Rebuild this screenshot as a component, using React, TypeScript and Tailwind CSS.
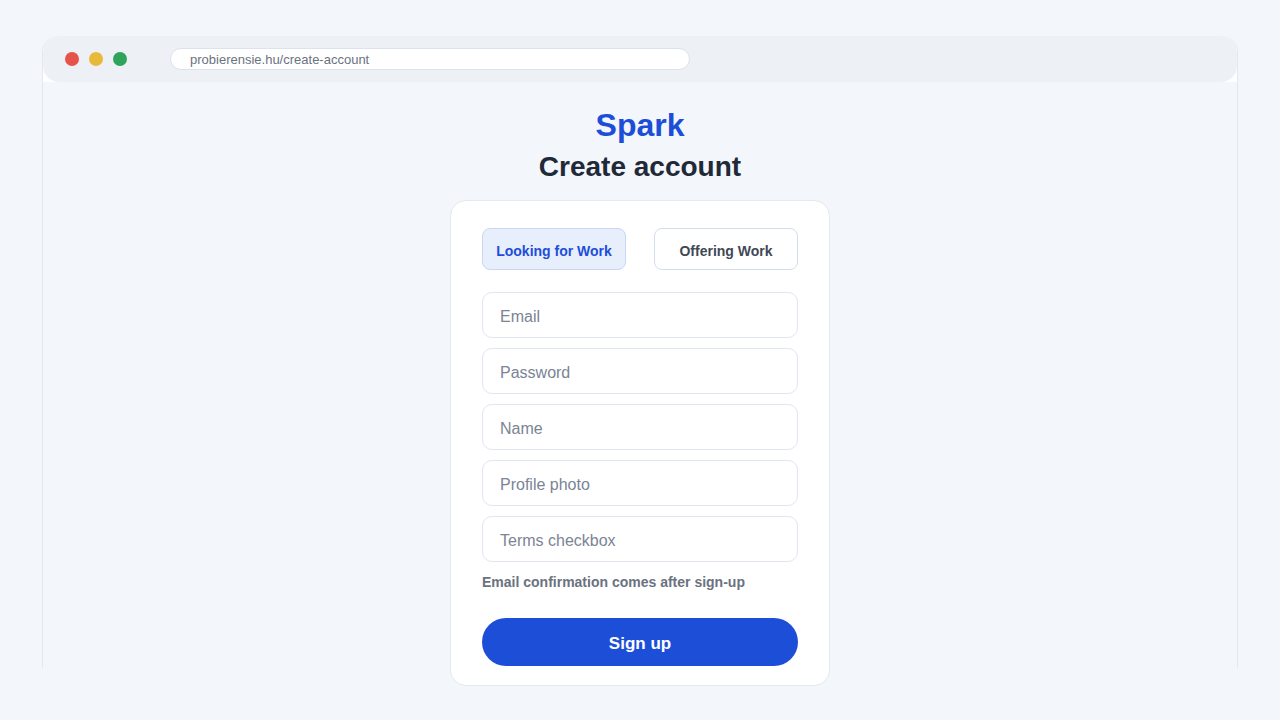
import React from "react";

export default function App() {
  const font = { fontFamily: '"Liberation Sans", Arial, sans-serif' };
  const fields = ["Email", "Password", "Name", "Profile photo", "Terms checkbox"];
  return (
    <div className="w-[1280px] h-[720px] overflow-hidden bg-[#f3f6fa] pt-[36px] px-[42px]" style={font}>
      <div className="h-[632px] flex flex-col rounded-t-2xl bg-white border-x border-[#e4e8ef]">
        <div className="h-[46px] shrink-0 rounded-2xl bg-[#edf1f6] flex items-center pl-[22px]">
          <div className="flex gap-[10px]">
            <span className="w-[14px] h-[14px] rounded-full bg-[#e5534b]" />
            <span className="w-[14px] h-[14px] rounded-full bg-[#e9b93a]" />
            <span className="w-[14px] h-[14px] rounded-full bg-[#2ea35a]" />
          </div>
          <div className="ml-[43px] w-[520px] h-[22px] rounded-full bg-white border border-[#dbe3ef] flex items-center pl-[19px] pt-[2px] text-[13px] text-[#6b7280]">
            probierensie.hu/create-account
          </div>
        </div>
        <div className="flex-1 bg-[#f3f6fa] flex flex-col items-center">
          <div className="mt-[23px] text-[32px] leading-[40px] font-bold text-[#1d4ed8]">Spark</div>
          <div className="mt-[4px] text-[28px] leading-[36px] font-bold text-[#1f2937]">Create account</div>
          <div className="mt-[15px] w-[380px] bg-white border border-[#e3e9f2] rounded-2xl px-[31px] pt-[27px] pb-[19px] flex flex-col">
            <div className="grid grid-cols-2 gap-[28px]">
              <button className="h-[42px] pt-[4px] rounded-lg bg-[#e8effc] border border-[#c8d7f3] text-[14px] font-bold text-[#1d4ed8]">
                Looking for Work
              </button>
              <button className="h-[42px] pt-[4px] rounded-lg bg-white border border-[#d3ddef] text-[14px] font-bold text-[#3f4856]">
                Offering Work
              </button>
            </div>
            <div className="mt-[22px] flex flex-col gap-[10px]">
              {fields.map((f) => (
                <div
                  key={f}
                  className="h-[46px] rounded-[10px] border border-[#dfe6f0] flex items-center pl-[17px] pt-[4px] text-[16px] text-[#7b8494]"
                >
                  {f}
                </div>
              ))}
            </div>
            <div className="mt-[10px] text-[14px] leading-[20px] font-bold text-[#6b7280]">
              Email confirmation comes after sign-up
            </div>
            <button className="mt-[26px] h-[48px] pt-[4px] rounded-full bg-[#1d4ed8] text-white text-[17px] font-bold">
              Sign up
            </button>
          </div>
        </div>
      </div>
    </div>
  );
}
